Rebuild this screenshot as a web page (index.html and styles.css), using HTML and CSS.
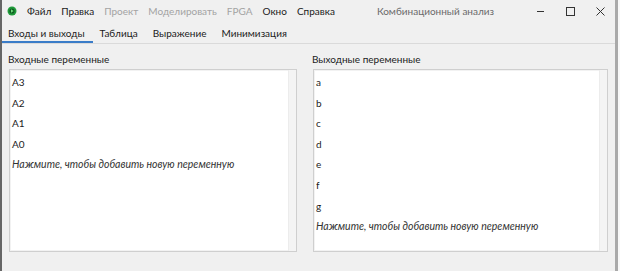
FILE: index.html
```html
<!DOCTYPE html>
<html>
<head>
  <meta charset=utf-8>
  <title>Комбинационный анализ</title>
<link rel="stylesheet" href="styles.css">
</head>
<body>

<div class=window>
  <div class=titleBar>
    <svg class=appIcon width=10 height=10 viewBox="0 0 10 10">
      <circle cx=5 cy=5 r=4.5 fill="#1f9a3a"/>
      <circle cx=5 cy=5 r=2.6 fill="#0d5e1f"/>
      <path d="M4 3.3 L6.6 5 L4 6.7 Z" fill="#6fdc7d"/>
    </svg>
    <div class=menu>
      <span>Файл</span>
      <span>Правка</span>
      <span class=off>Проект</span>
      <span class=off>Моделировать</span>
      <span class=off>FPGA</span>
      <span>Окно</span>
      <span>Справка</span>
    </div>
    <div class=caption>Комбинационный анализ</div>
    <div class=controls>
      <svg width=9 height=9 viewBox="0 0 9 9"><path d="M1 4.5 H8" stroke="#333" stroke-width=1 fill=none /></svg>
      <svg width=9 height=9 viewBox="0 0 9 9"><rect x=0.5 y=0.5 width=8 height=8 stroke="#333" stroke-width=1 fill=none /></svg>
      <svg width=9 height=9 viewBox="0 0 9 9"><path d="M0.5 0.5 L8.5 8.5 M8.5 0.5 L0.5 8.5" stroke="#333" stroke-width=1 fill=none /></svg>
    </div>
  </div>

  <div class=tabs>
    <span class='tab active'>Входы и выходы</span>
    <span class=tab>Таблица</span>
    <span class=tab>Выражение</span>
    <span class=tab>Минимизация</span>
  </div>

  <div class=panes>
    <div class=pane>
      <div class=paneTitle>Входные переменные</div>
      <div class='listBox inputs'>
        <div class=items>
          <div>A3</div>
          <div>A2</div>
          <div>A1</div>
          <div>A0</div>
          <div class=hint>Нажмите, чтобы добавить новую переменную</div>
        </div>
        <div class=scrollStrip></div>
      </div>
    </div>
    <div class=pane>
      <div class=paneTitle>Выходные переменные</div>
      <div class='listBox outputs'>
        <div class=items>
          <div>a</div>
          <div>b</div>
          <div>c</div>
          <div>d</div>
          <div>e</div>
          <div>f</div>
          <div>g</div>
          <div class=hint>Нажмите, чтобы добавить новую переменную</div>
        </div>
        <div class=scrollStrip></div>
      </div>
    </div>
  </div>
</div>

</body>
</html>
```
FILE: styles.css
```css
* {
  box-sizing: border-box;
  }
html, body {
  height: 100%;
  }
body {
  margin: 0;
  background: #f8f8f8;
  font: normal 10px "Lato", "Open Sans", sans-serif;
  color: #1b1b1b;
  }
.window {
  width: 618px;
  height: 271px;
  background: #f0f0f0;
  border-left: 2px solid #666;
  border-right: 3px solid #a9a9a9;
  }
.titleBar {
  display: flex;
  align-items: center;
  height: 22px;
  padding-left: 5px;
  white-space: nowrap;
  }
.appIcon {
  flex: none;
  }
.menu {
  display: flex;
  gap: 10px;
  margin-left: 10px;
  }
.menu .off {
  color: #a3a3a3;
  }
.caption {
  margin-left: 42px;
  color: #6a6a6a;
  }
.controls {
  display: flex;
  gap: 21px;
  margin-left: auto;
  margin-right: 10px;
  }
.tabs {
  display: flex;
  height: 22px;
  border-bottom: 1px solid #dadada;
  padding-left: 6px;
  }
.tab {
  padding: 3px 5px 0 0;
  margin-right: 10px;
  line-height: 17px;
  }
.tab.active {
  margin-left: -6px;
  padding-left: 6px;
  padding-right: 8px;
  margin-right: 7px;
  border-bottom: 2px solid #3a7cc8;
  }
.panes {
  display: grid;
  grid-template-columns: 288px 295px;
  gap: 16px;
  padding: 6px 0 0 7px;
  }
.paneTitle {
  margin-left: -1px;
  height: 19px;
  line-height: 18px;
  }
.listBox {
  display: flex;
  height: 183px;
  background: #fff;
  border: 1px solid #cfcfcf;
  box-shadow: inset 0 0 0 1px #f2f2f2;
  }
.items {
  flex: 1;
  padding: 2px 0 0 2px;
  }
.items div {
  line-height: 20.6px;
  }
.items .hint {
  font-style: italic;
  font-size: 10.5px;
  color: #333;
  }
.scrollStrip {
  width: 8px;
  background: #f4f4f4;
  border-left: 1px solid #ececec;
  }
```
